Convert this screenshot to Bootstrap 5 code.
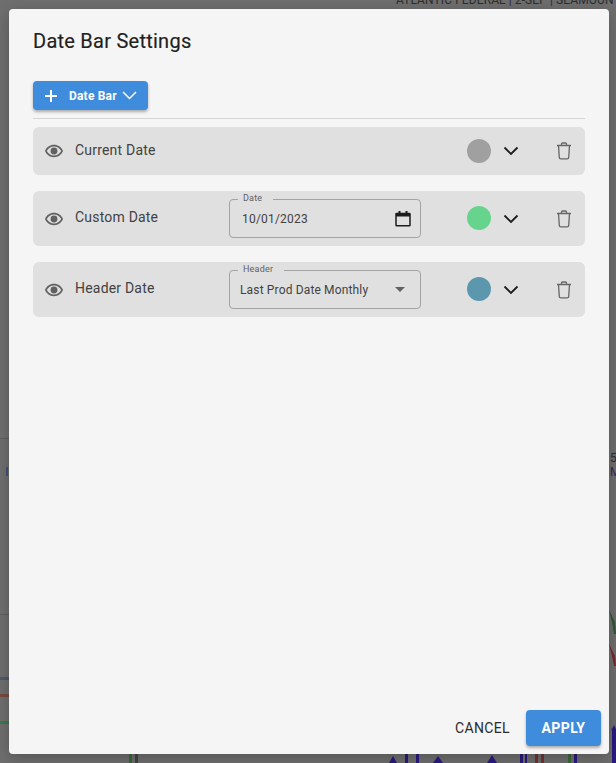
<!DOCTYPE html>
<html lang="en">
<head>
<meta charset="utf-8">
<title>Date Bar Settings</title>
<link href="https://cdn.jsdelivr.net/npm/bootstrap@5.3.0/dist/css/bootstrap.min.css" rel="stylesheet">
<style>
html,body{height:100%;margin:0;overflow:hidden}
body{background:#6f6f6f;font-family:Roboto,"Liberation Sans",sans-serif;color:#212121;position:relative;padding:9px 7px 9px 9px}
.bgtext{position:absolute;font-size:12px;line-height:14px;white-space:nowrap;color:#2d2d2d;letter-spacing:.1px}
.bgline{position:absolute;background:#5f5f5f}
.sheet{position:relative;width:600px;height:745px;background:#f5f5f5;border-radius:4px;padding:0 24px 8px 24px;box-shadow:0 4px 16px rgba(0,0,0,.25)}
.sheet-title{font-size:20px;font-weight:400;line-height:24px;letter-spacing:.25px;color:#212121;margin:0;padding:20px 0 28px;-webkit-text-stroke:.15px #212121}
.add-btn{width:115px;height:29px;background:#3f8cdc;border:0;border-radius:4px;color:#fff;font-size:12px;font-weight:700;letter-spacing:.2px;box-shadow:0 2px 3px rgba(0,0,0,.3);padding:0 11px 0 11px}
.add-btn:hover,.add-btn:active{background:#3f8cdc!important;color:#fff!important}
.add-btn .lbl{margin-left:11px;margin-right:5px}
.rule{height:1px;background:#d6d6d6;margin:8px 0}
.bar-row{background:#e0e0e0;border-radius:6px;padding:0 12px;margin-bottom:16px;height:55px}
.bar-row.short{height:48px}
.bar-name{width:154px;font-size:14px;letter-spacing:.2px;color:#424242;margin-left:12px;margin-bottom:2px}
.field-slot{width:192px}
.out-field{position:relative;height:39px;border:1px solid #a3a3a3;border-radius:4px;padding:0 9px 0 12px;font-size:12px;color:#424242}
.out-field.sel{padding-left:10px;padding-right:11px}
.out-field .date-val{letter-spacing:.2px}
.sel-val{letter-spacing:.15px}
.float-lbl{position:absolute;top:-7px;left:8px;background:#e0e0e0;font-size:9px;line-height:11px;letter-spacing:.2px;color:#616161;padding:0 11px 0 5px}
.dot{width:24px;height:24px;border-radius:50%;margin-left:46px}
.bar-row:not(.short) .dot{margin-top:-1px}
.chev{margin-left:12px}
.bin{margin-left:37px}
.sheet-foot{position:absolute;right:8px;bottom:8px}
.cancel-btn{font-size:14px;font-weight:400;letter-spacing:.35px;color:#2b2b2b;border:0;background:none;padding:0;margin-right:16px}
.apply-btn{width:75px;height:36px;background:#3f8cdc;border:0;border-radius:4px;color:#fff;font-size:14px;font-weight:700;letter-spacing:.4px;padding:0;box-shadow:0 2px 3px rgba(0,0,0,.3)}
.apply-btn:hover{background:#3f8cdc;color:#fff}
</style>
</head>
<body>
<div class="bgtext" style="left:396px;top:-7px">ATLANTIC FEDERAL | 2-SEP | SEAMOUNT</div>
<div class="bgtext" style="left:396px;top:8px;opacity:.6">HANNA 2-OH-LLP | 2H | SEP 3M</div>
<div class="bgtext" style="left:610px;top:451px">55</div>
<div class="bgtext" style="left:610px;top:465px;color:#3a2a55">M</div>
<div class="bgline" style="left:0;top:438px;width:9px;height:1px"></div>
<div class="bgline" style="left:6px;top:467px;width:2px;height:9px;background:#4a4f80"></div>
<div class="bgline" style="left:0;top:614px;width:9px;height:1px"></div>
<div class="bgline" style="left:0;top:677px;width:9px;height:3px;background:#4c5a70"></div>
<div class="bgline" style="left:0;top:694px;width:9px;height:3px;background:#7a4a40"></div>
<div class="bgline" style="left:0;top:721px;width:9px;height:3px;background:#3a7a4a"></div>
<div class="bgline" style="left:129px;top:754px;width:3px;height:9px;background:#3a6a3a"></div>
<div class="bgline" style="left:135px;top:754px;width:3px;height:9px;background:#444"></div>
<svg class="bgline" style="left:340px;top:600px;background:none" width="276" height="163" viewBox="0 0 276 163" aria-hidden="true"><path fill="#2a1a80" d="M49 163l4-7 4 7zM65 163v-9h3v9zM76 163v-9h3v9zM93 163l5-7 5 7zM147 163l5-8 5 8zM180 163v-9h3v9zM185 163v-9h2v9zM272 163v-35l-2 5 4-8 4 8-2-5v35z"/><path fill="#7a3030" d="M195 154h3v9h-3zM201 154h3v9h-3z"/><path fill="#3a6a3a" d="M228 154h3v9h-3z"/><path fill="#2a1a80" d="M234 154h3v9h-3z"/><path fill="#2f5a35" d="M269 10l6 12 1 12h-2l-2-12z"/><path fill="#7a2a2a" d="M269 44l6 12 1 10h-2l-2-10z"/></svg>
<div class="sheet">
  <h2 class="sheet-title">Date Bar Settings</h2>
  <button type="button" class="btn add-btn d-flex align-items-center">
    <svg width="14" height="14" viewBox="0 0 14 14" aria-hidden="true"><path d="M7 1v12M1 7h12" stroke="#fff" stroke-width="2" fill="none"/></svg>
    <span class="lbl">Date Bar</span>
    <svg width="15" height="9" viewBox="0 0 15 9" aria-hidden="true"><path d="M1 1l6.500 6.500L14 1" stroke="#fff" stroke-width="1.500" fill="none"/></svg>
  </button>
  <div class="rule"></div>

  <div class="bar-row short d-flex align-items-center">
    <svg width="18" height="18" viewBox="1 3 22 18" aria-hidden="true"><path fill="#616161" d="M12 6.500c3.790 0 7.170 2.130 8.820 5.500-1.650 3.370-5.020 5.500-8.820 5.500S4.830 15.370 3.180 12C4.830 8.630 8.210 6.500 12 6.500m0-2C7 4.500 2.730 7.610 1 12c1.730 4.390 6 7.500 11 7.500s9.270-3.110 11-7.500c-1.730-4.390-6-7.500-11-7.500z"/><circle cx="12" cy="12" r="4.200" fill="#616161"/></svg>
    <div class="bar-name">Current Date</div>
    <div class="field-slot"></div>
    <div class="dot" style="background:#a0a0a0"></div>
    <svg class="chev" width="16" height="10" viewBox="0 0 16 10" aria-hidden="true"><path d="M1.500 1.500L8 8l6.500-6.500" stroke="#1c1c1c" stroke-width="1.800" fill="none"/></svg>
    <svg class="bin" width="16" height="18" viewBox="0 0 16 18" aria-hidden="true"><path d="M1 3.500h14M5.500 3.500V2a1 1 0 0 1 1-1h3a1 1 0 0 1 1 1v1.500M2.500 3.500l.8 12a1.500 1.500 0 0 0 1.500 1.400h6.400a1.500 1.500 0 0 0 1.500-1.400l.8-12" stroke="#666" stroke-width="1.300" fill="none"/></svg>
  </div>

  <div class="bar-row d-flex align-items-center">
    <svg width="18" height="18" viewBox="1 3 22 18" aria-hidden="true"><path fill="#616161" d="M12 6.500c3.790 0 7.170 2.130 8.820 5.500-1.650 3.370-5.020 5.500-8.820 5.500S4.830 15.370 3.180 12C4.830 8.630 8.210 6.500 12 6.500m0-2C7 4.500 2.730 7.610 1 12c1.730 4.390 6 7.500 11 7.500s9.270-3.110 11-7.500c-1.730-4.390-6-7.500-11-7.500z"/><circle cx="12" cy="12" r="4.200" fill="#616161"/></svg>
    <div class="bar-name">Custom Date</div>
    <div class="field-slot">
      <div class="out-field d-flex align-items-center justify-content-between">
        <span class="float-lbl">Date</span>
        <span class="date-val">10/01/2023</span>
        <svg width="16" height="17" viewBox="0 0 16 17" aria-hidden="true"><path d="M1.500 3.500h13a.5.5 0 0 1 .5.500v11a.8.800 0 0 1-.8.800H1.800a.8.800 0 0 1-.8-.8V4a.5.5 0 0 1 .5-.5z" stroke="#1c1c1c" stroke-width="1.500" fill="none"/><path d="M1 3h14v3.500H1zM3.500 1h2v3h-2zM10.500 1h2v3h-2z" fill="#1c1c1c"/></svg>
      </div>
    </div>
    <div class="dot" style="background:#66d48c"></div>
    <svg class="chev" width="16" height="10" viewBox="0 0 16 10" aria-hidden="true"><path d="M1.500 1.500L8 8l6.500-6.500" stroke="#1c1c1c" stroke-width="1.800" fill="none"/></svg>
    <svg class="bin" width="16" height="18" viewBox="0 0 16 18" aria-hidden="true"><path d="M1 3.500h14M5.500 3.500V2a1 1 0 0 1 1-1h3a1 1 0 0 1 1 1v1.500M2.500 3.500l.8 12a1.500 1.500 0 0 0 1.500 1.400h6.400a1.500 1.500 0 0 0 1.500-1.400l.8-12" stroke="#666" stroke-width="1.300" fill="none"/></svg>
  </div>

  <div class="bar-row d-flex align-items-center">
    <svg width="18" height="18" viewBox="1 3 22 18" aria-hidden="true"><path fill="#616161" d="M12 6.500c3.790 0 7.170 2.130 8.820 5.500-1.650 3.370-5.020 5.500-8.820 5.500S4.830 15.370 3.180 12C4.830 8.630 8.210 6.500 12 6.500m0-2C7 4.500 2.730 7.610 1 12c1.730 4.390 6 7.500 11 7.500s9.270-3.110 11-7.500c-1.730-4.390-6-7.500-11-7.500z"/><circle cx="12" cy="12" r="4.200" fill="#616161"/></svg>
    <div class="bar-name">Header Date</div>
    <div class="field-slot">
      <div class="out-field sel d-flex align-items-center justify-content-between">
        <span class="float-lbl">Header</span>
        <span class="sel-val">Last Prod Date Monthly</span>
        <svg width="10" height="5" viewBox="0 0 10 5" aria-hidden="true" class="me-1"><path d="M0 0h10L5 5z" fill="#616161"/></svg>
      </div>
    </div>
    <div class="dot" style="background:#5b98ad"></div>
    <svg class="chev" width="16" height="10" viewBox="0 0 16 10" aria-hidden="true"><path d="M1.500 1.500L8 8l6.500-6.500" stroke="#1c1c1c" stroke-width="1.800" fill="none"/></svg>
    <svg class="bin" width="16" height="18" viewBox="0 0 16 18" aria-hidden="true"><path d="M1 3.500h14M5.500 3.500V2a1 1 0 0 1 1-1h3a1 1 0 0 1 1 1v1.500M2.500 3.500l.8 12a1.500 1.500 0 0 0 1.500 1.400h6.400a1.500 1.500 0 0 0 1.500-1.400l.8-12" stroke="#666" stroke-width="1.300" fill="none"/></svg>
  </div>

  <div class="sheet-foot d-flex align-items-center">
    <button type="button" class="cancel-btn">CANCEL</button>
    <button type="button" class="btn apply-btn">APPLY</button>
  </div>
</div>
<script src="https://cdn.jsdelivr.net/npm/bootstrap@5.3.0/dist/js/bootstrap.bundle.min.js"></script>
</body>
</html>
